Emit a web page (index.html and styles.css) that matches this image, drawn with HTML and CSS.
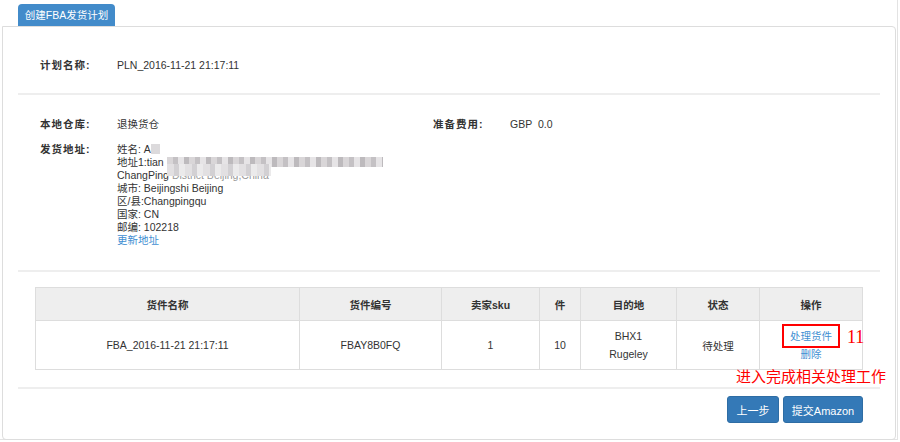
FILE: index.html
```html
<!DOCTYPE html>
<html lang="zh-CN">
	<head>
		<meta charset="UTF-8" />
		<title>创建FBA发货计划</title>
		<link rel="stylesheet" href="styles.css">
	</head>
	<body>
		<div class="page">
			<div class="tab">创建FBA发货计划</div>

			<div class="panel">
				<div class="section plan">
					<div class="row">
						<span class="label">计划名称:</span>
						<span class="value">PLN_2016-11-21 21:17:11</span>
					</div>
				</div>

				<div class="section info">
					<div class="info-grid">
						<div class="row">
							<span class="label">本地仓库:</span>
							<span class="value">退换货仓</span>
						</div>
						<div class="row">
							<span class="label">准备费用:</span>
							<span class="value">GBP&nbsp;&nbsp;0.0</span>
						</div>
					</div>
					<div class="row address">
						<span class="label">发货地址:</span>
						<div class="value lines">
							<div>姓名: A<span class="blur b1"></span></div>
							<div>地址1:tian <span class="blur b2"></span></div>
							<div class="faded">ChangPing <span class="ghost">District Beijing,China</span><span class="blur b3"></span></div>
							<div>城市: Beijingshi Beijing</div>
							<div>区/县:Changpingqu</div>
							<div>国家: CN</div>
							<div>邮编: 102218</div>
							<div><a href="#">更新地址</a></div>
						</div>
					</div>
				</div>

				<div class="section shipments">
					<table class="grid">
						<thead>
							<tr>
								<th class="c-name">货件名称</th>
								<th class="c-id">货件编号</th>
								<th class="c-sku">卖家sku</th>
								<th class="c-qty">件</th>
								<th class="c-dest">目的地</th>
								<th class="c-state">状态</th>
								<th class="c-op">操作</th>
							</tr>
						</thead>
						<tbody>
							<tr>
								<td>FBA_2016-11-21 21:17:11</td>
								<td>FBAY8B0FQ</td>
								<td>1</td>
								<td>10</td>
								<td class="two">BHX1<br>Rugeley</td>
								<td>待处理</td>
								<td class="two">
									<span class="mark"><a href="#">处理货件</a><span class="step">11</span></span><br>
									<a href="#">删除</a>
								</td>
							</tr>
						</tbody>
					</table>
					<div class="note">进入完成相关处理工作</div>
				</div>

				<div class="actions">
					<button class="btn prev">上一步</button>
					<button class="btn">提交Amazon</button>
				</div>
			</div>
		</div>
	</body>
</html>
```

FILE: styles.css
```css
body {
	margin: 0;
	background: #fff;
	font-family: "Liberation Sans", Arial, "Noto Sans CJK SC", sans-serif;
	font-size: 10.5px;
	color: #333;
}
a {
	color: #3f8fd2;
	text-decoration: none;
}
.page {
	width: 898px;
	height: 440px;
	padding-top: 4px;
	box-sizing: border-box;
	border-right: 1px solid #e3e3e3;
	border-bottom: 1px solid #e3e3e3;
}
.tab {
	display: inline-block;
	margin-left: 18px;
	width: 97px;
	height: 22px;
	line-height: 22px;
	text-align: center;
	background: #428bca;
	color: #fff;
	font-size: 10.5px;
	border-radius: 4px 4px 0 0;
}
.panel {
	margin-left: 2px;
	width: 894px;
	box-sizing: border-box;
	border: 1px solid #ddd;
	border-radius: 0 4px 4px 4px;
	padding: 0 15px;
}
.section {
	border-bottom: 2px solid #eee;
}
.plan {
	padding: 29px 0 19px;
}
.info {
	padding: 20px 0 23px;
}
.row {
	display: flex;
	line-height: 18px;
	padding-left: 22px;
}
.label {
	width: 77px;
	flex: none;
	font-weight: bold;
	letter-spacing: 1px;
}
.info-grid {
	display: grid;
	grid-template-columns: 415px 1fr;
}
.info-grid .row + .row {
	padding-left: 0;
}
.address {
	margin-top: 10px;
	line-height: 13px;
}
.lines div {
	white-space: nowrap;
}
.blur {
	display: inline-block;
	height: 10px;
	vertical-align: -1px;
	background: repeating-linear-gradient(90deg, #d9d6d8 0 6px, #c4c1c4 6px 11px, #e6e4e6 11px 17px, #bdbabd 17px 22px);
}
.b1 {
	width: 9px;
	background: #dcdadc;
}
.b2 {
	width: 216px;
}
.faded {
	position: relative;
}
.ghost {
	color: #999;
}
.b3 {
	position: absolute;
	left: 50px;
	top: -5px;
	width: 104px;
	height: 12px;
	background: repeating-linear-gradient(90deg, #e2e0e2 0 7px, #d2d0d3 7px 12px, #ebeaeb 12px 18px);
}
.shipments {
	position: relative;
	padding: 15px 17px 17px;
}
.grid {
	width: 100%;
	border-collapse: collapse;
	table-layout: fixed;
}
.grid th,
.grid td {
	border: 1px solid #ddd;
	text-align: center;
	vertical-align: middle;
	padding: 0;
}
.grid th {
	height: 32px;
	background: #eee;
	font-weight: bold;
}
.grid td {
	height: 48px;
}
.grid td.two {
	line-height: 18px;
}
.c-name { width: 263px; }
.c-id { width: 141px; }
.c-sku { width: 97px; }
.c-qty { width: 40px; }
.c-dest { width: 95px; }
.c-state { width: 82px; }
.mark {
	position: relative;
	border: 2px solid #f00;
	padding: 4px 6px;
}
.step {
	position: absolute;
	left: 63px;
	top: -1px;
	color: #f00;
	font-family: "Liberation Serif", "Times New Roman", serif;
	font-size: 18px;
	line-height: 24px;
}
.note {
	position: absolute;
	right: -6px;
	bottom: 1px;
	color: #f00;
	font-family: "Liberation Serif", "Noto Sans CJK SC", serif;
	font-size: 15px;
	line-height: 18px;
}
.actions {
	display: flex;
	justify-content: flex-end;
	gap: 4px;
	padding: 7px 17px 16px;
}
.btn {
	height: 27px;
	width: 80px;
	padding: 0;
	border: 1px solid #2e6da4;
	border-radius: 3px;
	background: #3479b7;
	color: #fff;
	font-family: inherit;
	font-size: 11px;
}
.btn.prev {
	width: 52px;
}
```
